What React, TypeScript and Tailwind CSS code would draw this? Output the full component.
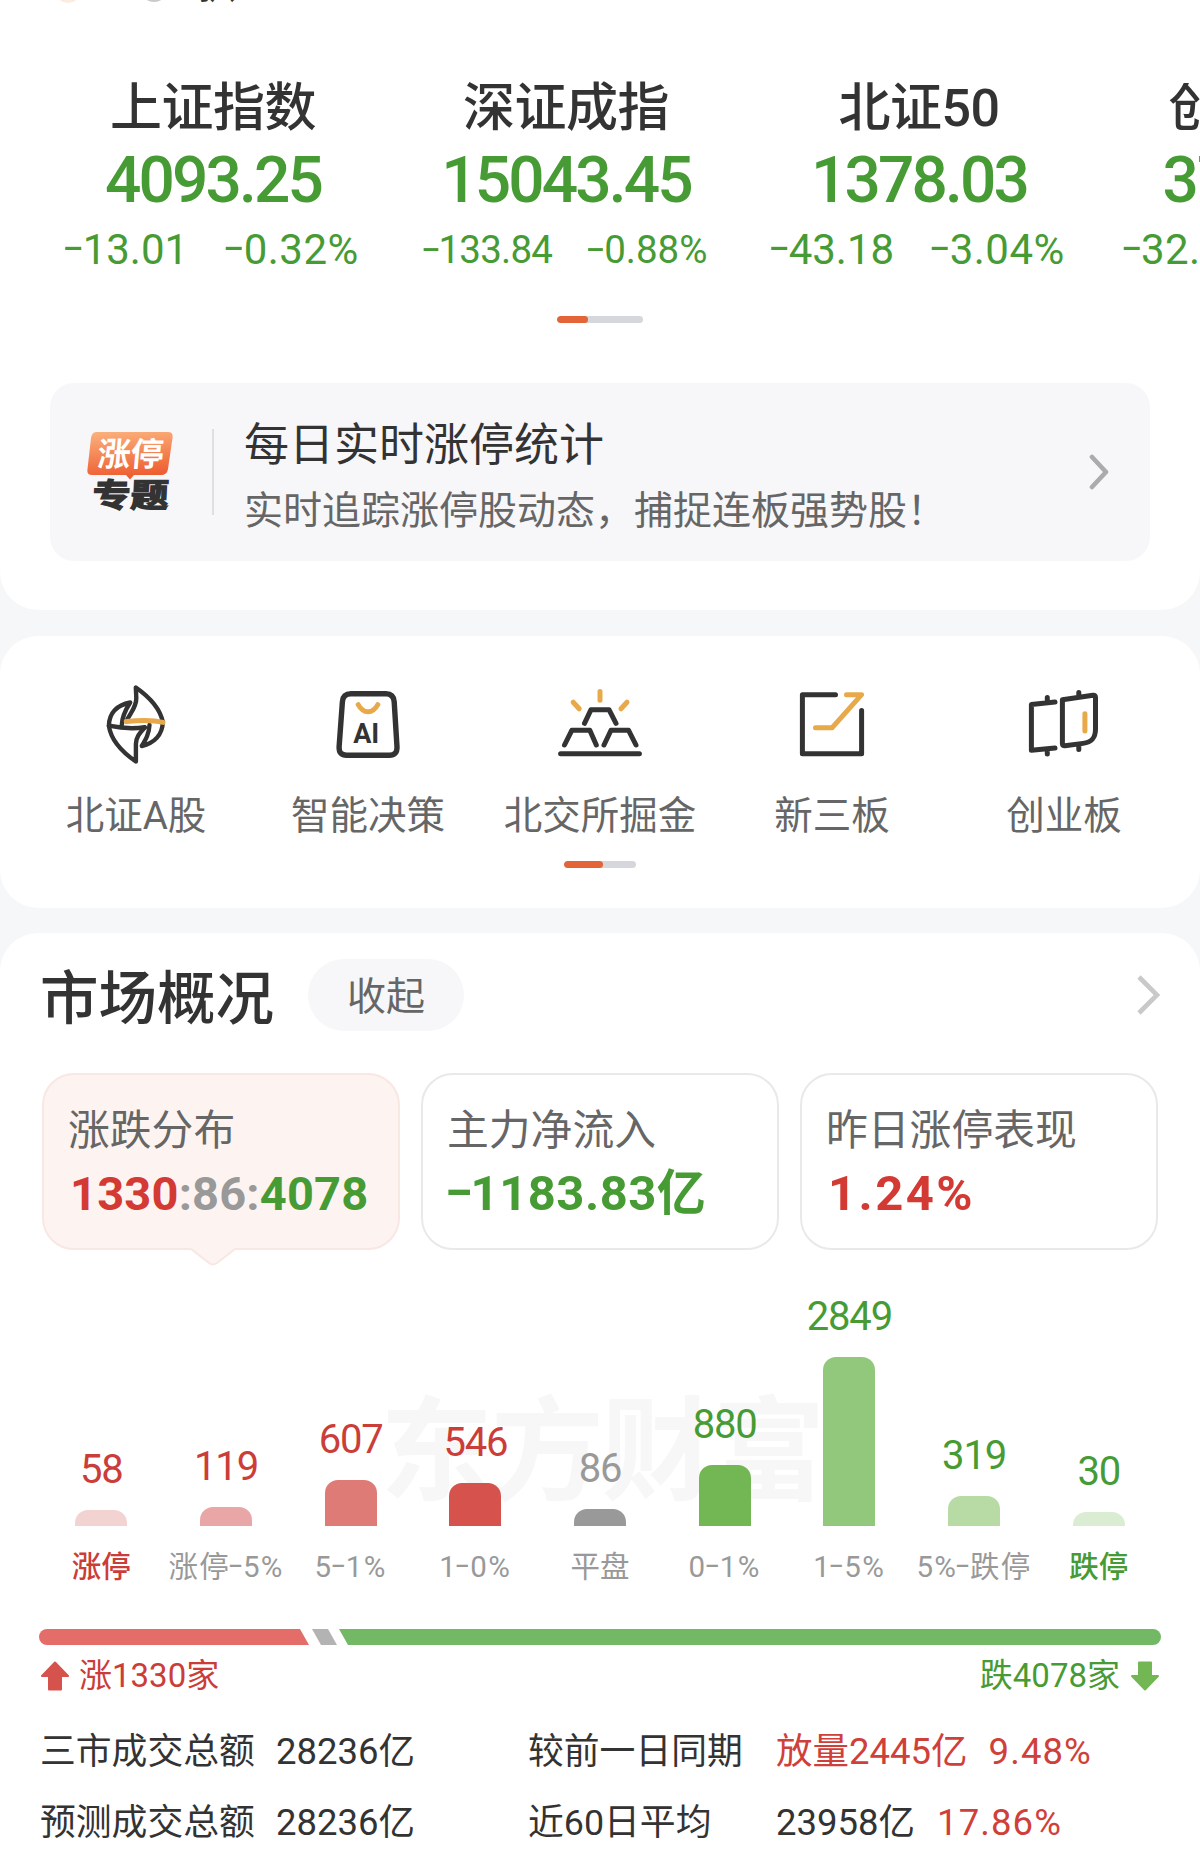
import type { ReactNode } from "react";
import clsx from "clsx";

const indices = [
  { name: "上证指数", value: "4093.25", change: "-13.01", percent: "-0.32%", small: false },
  { name: "深证成指", value: "15043.45", change: "-133.84", percent: "-0.88%", small: true },
  { name: "北证50", value: "1378.03", change: "-43.18", percent: "-3.04%", small: false },
];

const bars = [
  { label: "涨停", count: 58, height: 16, bar: "bg-[#f3d2d2]", text: "text-[#cb3d38]", labelText: "text-[#cb3d38] font-medium" },
  { label: "涨停-5%", count: 119, height: 19, bar: "bg-[#e8a6a6]", text: "text-[#cb3d38]", labelText: "text-[#999] tracking-[0.04em]" },
  { label: "5-1%", count: 607, height: 46, bar: "bg-[#de7b76]", text: "text-[#cb3d38]", labelText: "text-[#999] tracking-[0.05em]" },
  { label: "1-0%", count: 546, height: 43, bar: "bg-[#d6524d]", text: "text-[#cb3d38]", labelText: "text-[#999] tracking-[0.05em]" },
  { label: "平盘", count: 86, height: 17, bar: "bg-[#999]", text: "text-[#999]", labelText: "text-[#999]" },
  { label: "0-1%", count: 880, height: 61, bar: "bg-[#73b755]", text: "text-[#479b34]", labelText: "text-[#999] tracking-[0.05em]" },
  { label: "1-5%", count: 2849, height: 169, bar: "bg-[#92c87c]", text: "text-[#479b34]", labelText: "text-[#999] tracking-[0.05em]" },
  { label: "5%-跌停", count: 319, height: 30, bar: "bg-[#b8dba6]", text: "text-[#479b34]", labelText: "text-[#999] tracking-[0.04em]" },
  { label: "跌停", count: 30, height: 14, bar: "bg-[#daecd2]", text: "text-[#479b34]", labelText: "text-[#479b34] font-medium" },
];

// Numbers use a wide dash that sits at mid digit height
function Num({ children }: { children: string }) {
  return (
    <>
      {children.split(/(-)/).map((part, i) =>
        part === "-" ? (
          <span key={i} className="inline-block w-[0.44em] text-center origin-center -translate-y-[0.06em] scale-x-[1.6]">
            -
          </span>
        ) : (
          part
        )
      )}
    </>
  );
}

function Pager({ className, active }: { className: string; active: string }) {
  return (
    <div className={clsx("mx-auto h-[7px] rounded-full bg-[#d6d6dd] overflow-hidden", className)}>
      <div className={clsx("h-full rounded-full bg-[#e36436]", active)} />
    </div>
  );
}

function Icon({ children }: { children: ReactNode }) {
  return (
    <svg
      width="84"
      height="84"
      viewBox="0 0 84 84"
      fill="none"
      stroke="#333"
      strokeWidth="5"
      strokeLinecap="round"
      strokeLinejoin="round"
    >
      {children}
    </svg>
  );
}

const shortcuts = [
  {
    label: "北证A股",
    icon: (
      <Icon>
        <g strokeWidth="4.4">
          <path d="M33 38C37 30 42.500 25 42.300 16L41.800 5.500C54 14 66 26 68.800 40C68.500 53 60 61 47.800 64C52 57 55 52 55.500 43" />
          <path d="M50.800 45.600C45 52 42.200 55 41.900 62V79.500C28 70 17 58 14.900 44C15 31 23 23 36.200 20.500C32 27 28 34 27.800 43" />
          <path d="M14.9 43.7C26 46 39 47 50.8 45.3" />
        </g>
        <path d="M32.3 39.6C46 38 58 37.6 69 40.4" stroke="#e8a94a" />
      </Icon>
    ),
  },
  {
    label: "智能决策",
    icon: (
      <Icon>
        <path
          d="M25 11.800H60Q67.600 11.800 68.200 19.800L71 65Q71.200 73.200 63.500 73.200H20.500Q12.800 73.200 13.100 65L16.400 19.800Q17 11.800 25 11.800Z"
          strokeWidth="5.4"
        />
        <path d="M32.2 22.6Q36 29.6 42 29.8Q48 29.6 51.8 22.6" stroke="#e8a94a" />
        <text
          x="40.2"
          y="61.4"
          textAnchor="middle"
          fontFamily="Roboto, sans-serif"
          fontSize="27"
          fontWeight="700"
          fill="#333"
          stroke="none"
        >
          AI
        </text>
      </Icon>
    ),
  },
  {
    label: "北交所掘金",
    icon: (
      <Icon>
        <path d="M2.6 71.7H81.4" />
        <path d="M6.5 63L13.8 48.3H31.8L38.3 63M46 63L53 48.3H70.6L78 63M26.5 41.3L33 27.7H51L58 41.3" />
        <path d="M42 9.5V18.2M15.2 20.2L21.2 26.8M69 20.2L63 26.8" stroke="#e8a94a" />
      </Icon>
    ),
  },
  {
    label: "新三板",
    icon: (
      <Icon>
        <path d="M45.5 12.7H12.4V71.7H71.6V28.5" />
        <path d="M56.5 12.7H71.6L42.2 45.7H25.5" stroke="#e8a94a" />
      </Icon>
    ),
  },
  {
    label: "创业板",
    icon: (
      <Icon>
        <path d="M33 20L9.4 22.6V68.3L33 66M25.3 15.5V20.5M25.3 67.5V72" />
        <path d="M40.4 17.8L71 13.3Q73.5 13 73.5 15.5V47C73.5 56 70 60 61 61.4L43 63.8Q40.4 64 40.4 61.5ZM56.8 10.5V15M56.8 62.5V67.5" />
        <path d="M62.9 31.8V49" stroke="#e8a94a" />
      </Icon>
    ),
  },
];

function IndexPanel() {
  return (
    <section className="h-[610px] bg-white rounded-b-[38px] overflow-hidden">
      <div className="h-[83px] overflow-hidden flex items-start pl-[54px]">
        <span className="size-7 -mt-[25px] rounded-full bg-[#fcebe1]" />
        <span className="size-7 -mt-[26px] ml-[58px] rounded-full bg-[#c9c9c9]" />
        <span className="-mt-[34px] ml-[30px] text-[38px] leading-[38px] font-medium text-[#333]">扒</span>
      </div>

      <div className="flex h-[233px] pl-[36.5px] text-[#479b34]">
        {indices.map((item) => (
          <div key={item.name} className="w-[353px] shrink-0 flex flex-col items-center whitespace-nowrap">
            <div className="text-[52px] leading-[52px] font-medium text-[#333] tracking-[-0.01em]">{item.name}</div>
            <div className="mt-[10px] text-[64px] leading-[72px] font-medium tracking-[-0.045em]">{item.value}</div>
            <div
              className={clsx(
                "mt-[11px] -ml-[3px] flex leading-[44px]",
                item.small ? "text-[38.5px] gap-[35px]" : "text-[42px] gap-[37px]"
              )}
            >
              <span className={item.small ? "tracking-[-0.02em]" : "tracking-normal"}>
                <Num>{item.change}</Num>
              </span>
              <span className={item.small ? "tracking-normal" : "tracking-[0.012em]"}>
                <Num>{item.percent}</Num>
              </span>
            </div>
          </div>
        ))}
        <div className="flex-1 min-w-0 overflow-hidden whitespace-nowrap">
          <div className="pl-[73px] text-[52px] leading-[52px] font-medium text-[#333]">创</div>
          <div className="mt-[10px] pl-[67px] text-[64px] leading-[72px] font-medium tracking-[-0.03em]">37</div>
          <div className="mt-[11px] pl-[27px] text-[42px] leading-[44px] tracking-[0.01em]">
            <Num>-32.</Num>
          </div>
        </div>
      </div>

      <Pager className="w-[86px]" active="w-[31px]" />

      <div className="mt-[60px] mx-[50px] h-[178px] rounded-[24px] bg-[#f7f7fa] flex items-center pl-[37px] pr-[41px]">
        <TopicLogo />
        <div className="ml-[39px] mr-[30px] w-[2px] h-[86px] bg-[#dfdfe2]" />
        <div className="flex-1 pt-[12px] whitespace-nowrap">
          <div className="text-[45px] leading-[56px] text-[#333]">每日实时涨停统计</div>
          <div className="mt-[9px] text-[39px] leading-[56px] text-[#666]">实时追踪涨停股动态，捕捉连板强势股！</div>
        </div>
        <svg width="20" height="38" viewBox="0 0 20 38" fill="none" stroke="#ababad" strokeWidth="4.6" strokeLinecap="round" strokeLinejoin="round">
          <path d="M3 4L17 19L3 34" />
        </svg>
      </div>
    </section>
  );
}

function TopicLogo() {
  return (
    <svg width="86" height="84" viewBox="0 0 86 84" className="shrink-0">
      <defs>
        <linearGradient id="topic" x1="0" y1="0" x2="0.15" y2="1">
          <stop offset="0" stopColor="#fbb27e" />
          <stop offset="1" stopColor="#ee5c30" />
        </linearGradient>
      </defs>
      <path
        d="M9 2H81Q86.500 2 85.500 8L81 39Q80 45 74 45H47L43 49.500L39 45H5Q-.5 45 .5 39L4 8Q5 2 9 2Z"
        fill="url(#topic)"
      />
      <g fontFamily="'Noto Sans CJK SC', sans-serif" fontWeight="700">
        <text x="13" y="36" fontSize="33" fill="#fff" transform="skewX(-5)">
          涨停
        </text>
        <text x="9" y="90" fontSize="38" fill="#333" stroke="#333" strokeWidth="1.6" transform="skewX(-3) scale(1 .86)">
          专题
        </text>
      </g>
    </svg>
  );
}

function Shortcuts() {
  return (
    <section className="mt-[26px] h-[272px] bg-white rounded-[38px] pt-[46px]">
      <div className="grid grid-cols-5 mx-5">
        {shortcuts.map((item) => (
          <div key={item.label} className="flex flex-col items-center whitespace-nowrap">
            {item.icon}
            <div className="mt-[26px] text-[38.5px] leading-[48px] text-[#666]">{item.label}</div>
          </div>
        ))}
      </div>
      <Pager className="mt-[21px] w-[72px]" active="w-[39px]" />
    </section>
  );
}

function SummaryCard({ title, active, children }: { title: string; active?: boolean; children: ReactNode }) {
  return (
    <div
      className={clsx(
        "relative h-[177px] rounded-[32px] border-2 pt-[30px] pl-[24px] whitespace-nowrap",
        active ? "bg-[#fdf4f1] border-[#f8e7e2]" : "bg-white border-[#e9e9e9]"
      )}
    >
      <div className="text-[41.8px] leading-[52px] text-[#666]">{title}</div>
      <div className="mt-[11px] text-[49px] leading-[52px] font-bold">{children}</div>
      {active && (
        <svg className="absolute left-[146px] top-[173px]" width="46" height="18" viewBox="0 0 46 18">
          <path d="M1 0L19 15Q23 18 27 15L45 0Z" fill="#fdf4f1" />
          <path d="M1 1L19 15Q23 18 27 15L45 1" fill="none" stroke="#f8e7e2" strokeWidth="2" />
        </svg>
      )}
    </div>
  );
}

function Distribution() {
  return (
    <div className="relative h-[335px]">
      {/* Watermark */}
      <div className="absolute left-[380px] top-[143px] text-[113px] leading-[120px] font-bold text-[#f7f7f7] tracking-[-0.02em] whitespace-nowrap">
        东方财富
      </div>
      <div className="relative h-full flex pl-[39px] pr-[39px]">
        {bars.map((item) => (
          <div key={item.label} className="flex-1 min-w-0 flex flex-col items-center justify-end whitespace-nowrap">
            <div className={clsx("text-[40px] leading-[40px] tracking-[-0.03em]", item.text)}>{item.count}</div>
            <div className={clsx("mt-[20px] w-[52px] rounded-t-[13px]", item.bar)} style={{ height: item.height }} />
            <div className={clsx("mt-[23px] text-[29.5px] leading-[36px]", item.labelText)}>
              <Num>{item.label}</Num>
            </div>
          </div>
        ))}
      </div>
    </div>
  );
}

function MarketOverview() {
  return (
    <section className="mt-[25px] h-[930px] bg-white rounded-t-[38px] pt-[26px] overflow-hidden">
      <div className="flex items-center h-[72px] pl-[40px] pr-[38px]">
        <h2 className="pt-[7px] text-[58.5px] leading-[72px] font-medium text-[#333]">市场概况</h2>
        <button className="ml-[34px] w-[156px] h-[72px] rounded-full bg-[#f7f7fa] pt-[2px] text-[39px] leading-[72px] text-[#666]">
          收起
        </button>
        <svg className="ml-auto" width="26" height="42" viewBox="0 0 26 42" fill="none" stroke="#c9c9c9" strokeWidth="4.6">
          <path d="M3 3L21 21L3 39" />
        </svg>
      </div>

      <div className="mt-[42px] grid grid-cols-3 gap-[21px] pl-[42px] pr-[42px]">
        <SummaryCard title="涨跌分布" active>
          <span className="text-[47px] text-[#999] pl-[2px] tracking-[0.004em]">
            <span className="text-[#d43a34]">1330</span>:86:<span className="text-[#479b34]">4078</span>
          </span>
        </SummaryCard>
        <SummaryCard title="主力净流入">
          <span className="pl-[2px] text-[#479b34] tracking-[0.01em]">
            <Num>-1183.83亿</Num>
          </span>
        </SummaryCard>
        <SummaryCard title="昨日涨停表现">
          <span className="pl-[2px] text-[#d43a34] tracking-[0.05em]">1.24%</span>
        </SummaryCard>
      </div>

      <Distribution />

      {/* Advance / decline ratio */}
      <div className="mt-[44px] mx-[39px] flex h-4 rounded-full overflow-hidden">
        <div className="w-[270px] bg-[#e46c69] [clip-path:polygon(0_0,261px_0,100%_100%,0_100%)]" />
        <div className="ml-[3px] w-[25px] bg-[#b3b3b3] [clip-path:polygon(0_0,16px_0,100%_100%,9px_100%)]" />
        <div className="ml-[2px] flex-1 bg-[#73b864] [clip-path:polygon(0_0,100%_0,100%_100%,9px_100%)]" />
      </div>
      <div className="mt-[10px] mx-[41px] flex items-center h-[42px] text-[33px] leading-[42px]">
        <svg width="28" height="30" viewBox="0 0 28 30" fill="#d6524d" stroke="#d6524d" strokeWidth="2" strokeLinejoin="round">
          <path d="M14 1.500L27 15H20V28.500H8V15H1Z" />
        </svg>
        <span className="ml-[10px] text-[#cb3d38]">涨1330家</span>
        <span className="ml-auto mr-[11px] text-[#479b34]">跌4078家</span>
        <svg width="28" height="30" viewBox="0 0 28 30" fill="#73b755" stroke="#73b755" strokeWidth="2" strokeLinejoin="round">
          <path d="M14 28.500L27 15H20V1.500H8V15H1Z" />
        </svg>
      </div>

      {/* Turnover */}
      <div className="mt-[31px] grid grid-cols-[236px_252px_248px_1fr] gap-y-[23px] pl-[40px] text-[35.8px] leading-[48px] text-[#333] whitespace-nowrap">
        <span>三市成交总额</span>
        <span className="text-[36.5px]">28236亿</span>
        <span>较前一日同期</span>
        <span className="text-[36.5px] text-[#d0403a]">
          放量2445亿<span className="ml-[21px] tracking-[0.03em]">9.48%</span>
        </span>
        <span>预测成交总额</span>
        <span className="text-[36.5px]">28236亿</span>
        <span>近60日平均</span>
        <span className="text-[36.5px]">
          23958亿<span className="ml-[22px] text-[#d0403a] tracking-[0.03em]">17.86%</span>
        </span>
      </div>
    </section>
  );
}

export default function App() {
  return (
    <main className="w-[1200px] h-[1863px] overflow-hidden bg-[#f6f7f9] font-[Roboto,'Noto_Sans_CJK_SC',sans-serif]">
      <IndexPanel />
      <Shortcuts />
      <MarketOverview />
    </main>
  );
}
